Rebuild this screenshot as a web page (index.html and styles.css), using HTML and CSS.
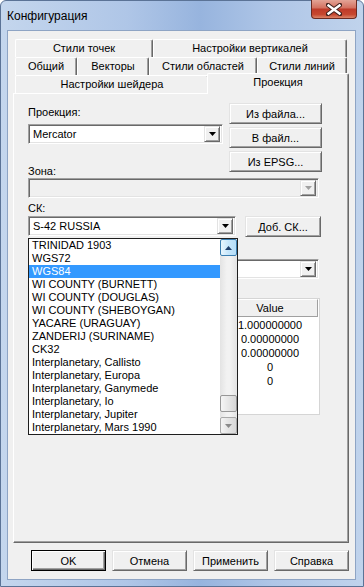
FILE: index.html
```html
<!DOCTYPE html>
<html lang="ru">

<head>
      <meta charset="UTF-8">
      <meta name="viewport" content="width=device-width, initial-scale=1.0">
      <title>Конфигурация</title>
      <link rel="stylesheet" href="styles.css">
</head>

<body>
      <div class="window">
            <div class="titlebar">
                  <span class="title">Конфигурация</span>
                  <div class="close-btn">
                        <svg width="16" height="13" viewBox="0 0 16 13">
                              <path d="M2 2 L14 11 M14 2 L2 11" stroke="#40201c" stroke-width="4.4" stroke-linecap="round" fill="none"/>
                              <path d="M2.5 2.5 L13.5 10.5 M13.5 2.5 L2.5 10.5" stroke="#fff" stroke-width="2.4" stroke-linecap="square" fill="none"/>
                        </svg>
                  </div>
            </div>

            <div class="client">
                  <div class="tabs">
                        <div class="tab-row">
                              <div class="tab" style="width: 138px">Стили точек</div>
                              <div class="tab" style="width: 194px">Настройки вертикалей</div>
                        </div>
                        <div class="tab-row">
                              <div class="tab" style="width: 62px">Общий</div>
                              <div class="tab" style="width: 72px">Векторы</div>
                              <div class="tab" style="width: 108px">Стили областей</div>
                              <div class="tab" style="width: 90px">Стили линий</div>
                        </div>
                        <div class="tab-row">
                              <div class="tab" style="width: 194px">Настройки шейдера</div>
                              <div class="tab tab-active">Проекция</div>
                        </div>
                  </div>

                  <div class="panel">
                        <div class="proj-row">
                              <div class="proj-left">
                                    <div class="label">Проекция:</div>
                                    <div class="combo proj-combo">
                                          <span class="combo-text">Mercator</span>
                                          <span class="drop-btn"><svg width="7" height="4" viewBox="0 0 7 4"><path d="M0 0 H7 L3.5 4 Z" fill="#000"/></svg></span>
                                    </div>
                                    <div class="label zone-label">Зона:</div>
                              </div>
                              <div class="file-buttons">
                                    <button class="btn">Из файла...</button>
                                    <button class="btn">В файл...</button>
                                    <button class="btn">Из EPSG...</button>
                              </div>
                        </div>

                        <div class="combo combo-full combo-disabled">
                              <span class="combo-text"></span>
                              <span class="drop-btn"><svg width="7" height="4" viewBox="0 0 7 4"><path d="M0 0 H7 L3.5 4 Z" fill="#a0a0a0"/></svg></span>
                        </div>

                        <div class="label ck-label">СК:</div>
                        <div class="ck-row">
                              <div class="combo ck-combo">
                                    <span class="combo-text">S-42 RUSSIA</span>
                                    <span class="drop-btn"><svg width="7" height="4" viewBox="0 0 7 4"><path d="M0 0 H7 L3.5 4 Z" fill="#000"/></svg></span>
                              </div>
                              <button class="btn add-btn">Доб. СК...</button>
                        </div>

                        <div class="combo combo-full datum-combo">
                              <span class="combo-text"></span>
                              <span class="drop-btn"><svg width="7" height="4" viewBox="0 0 7 4"><path d="M0 0 H7 L3.5 4 Z" fill="#000"/></svg></span>
                        </div>

                        <div class="listview">
                              <div class="lv-header">
                                    <div class="lv-head lv-name"></div>
                                    <div class="lv-head lv-value">Value</div>
                              </div>
                              <div class="lv-row"><span class="lv-name"></span><span class="lv-value">1.000000000</span></div>
                              <div class="lv-row"><span class="lv-name"></span><span class="lv-value">0.00000000</span></div>
                              <div class="lv-row"><span class="lv-name"></span><span class="lv-value">0.00000000</span></div>
                              <div class="lv-row"><span class="lv-name"></span><span class="lv-value">0</span></div>
                              <div class="lv-row"><span class="lv-name"></span><span class="lv-value">0</span></div>
                        </div>

                        <!-- открытый список СК поверх остальных полей -->
                        <div class="dropdown">
                              <div class="dd-items">
                                    <div class="dd-item">TRINIDAD 1903</div>
                                    <div class="dd-item">WGS72</div>
                                    <div class="dd-item dd-selected">WGS84</div>
                                    <div class="dd-item">WI COUNTY (BURNETT)</div>
                                    <div class="dd-item">WI COUNTY (DOUGLAS)</div>
                                    <div class="dd-item">WI COUNTY (SHEBOYGAN)</div>
                                    <div class="dd-item">YACARE (URAGUAY)</div>
                                    <div class="dd-item">ZANDERIJ (SURINAME)</div>
                                    <div class="dd-item">CK32</div>
                                    <div class="dd-item">Interplanetary, Callisto</div>
                                    <div class="dd-item">Interplanetary, Europa</div>
                                    <div class="dd-item">Interplanetary, Ganymede</div>
                                    <div class="dd-item">Interplanetary, Io</div>
                                    <div class="dd-item">Interplanetary, Jupiter</div>
                                    <div class="dd-item">Interplanetary, Mars 1990</div>
                              </div>
                              <div class="scrollbar">
                                    <div class="sb-btn sb-hover"><svg width="7" height="4" viewBox="0 0 7 4"><path d="M3.5 0 L7 4 H0 Z" fill="#1f3e6a"/></svg></div>
                                    <div class="sb-track"><div class="sb-thumb"></div></div>
                                    <div class="sb-btn"><svg width="7" height="4" viewBox="0 0 7 4"><path d="M0 0 H7 L3.5 4 Z" fill="#8a8a8a"/></svg></div>
                              </div>
                        </div>
                  </div>

                  <div class="footer">
                        <button class="btn btn-default">OK</button>
                        <button class="btn">Отмена</button>
                        <button class="btn">Применить</button>
                        <button class="btn">Справка</button>
                  </div>
            </div>
      </div>
</body>

</html>
```

FILE: styles.css
```css
* {
      box-sizing: border-box;
}

body {
      margin: 0;
      font-family: "Liberation Sans", Arial, sans-serif;
      font-size: 11px;
      color: #000;
      background: #fff;
}

/* рамка окна */
.window {
      position: relative;
      width: 364px;
      height: 587px;
      display: flex;
      flex-direction: column;
      padding: 0 7px 6px 6px;
      border: 1px solid #5b7396;
      border-radius: 6px 6px 0 0;
      background: linear-gradient(to right, #c4d6ed 0%, #afc6e7 35%, #97b4de 55%, #afc6e7 75%, #c0d3ec 100%);
}

.titlebar {
      height: 29px;
      display: flex;
      align-items: center;
}

.title {
      font-size: 12px;
      color: #000;
}

.close-btn {
      position: absolute;
      top: -1px;
      right: 6px;
      width: 46px;
      height: 19px;
      display: flex;
      align-items: center;
      justify-content: center;
      border: 1px solid #6b2b22;
      border-top: none;
      border-radius: 0 0 4px 4px;
      background: linear-gradient(to bottom, #e3a496 0%, #d47362 42%, #bf3b29 52%, #c6472f 80%, #dc8468 100%);
}

.client {
      flex: 1;
      display: flex;
      flex-direction: column;
      background: #f0f0f0;
      border: 1px solid #8ea4c4;
      padding: 8px 6px 8px 5px;
}

/* вкладки */
.tabs {
      display: flex;
      flex-direction: column;
}

.tab-row {
      display: flex;
      height: 18px;
      margin-left: 2px;
}

.tab {
      height: 18px;
      border: 1px solid #fff;
      border-right-color: #696969;
      border-bottom: none;
      border-radius: 2px 2px 0 0;
      box-shadow: inset -1px 0 #a0a0a0;
      background: #f0f0f0;
      text-align: center;
      line-height: 17px;
      white-space: nowrap;
}

.tab-active {
      position: relative;
      z-index: 1;
      width: 142px;
      height: 21px;
      margin-left: -2px;
      margin-top: -2px;
      line-height: 16px;
}

.panel {
      position: relative;
      flex: 1;
      border: 1px solid;
      border-color: #fff #696969 #696969 #fff;
      box-shadow: inset -1px -1px #a0a0a0;
      padding: 9px 0 0 14px;
}

.label {
      line-height: 13px;
      height: 13px;
}

.proj-row {
      display: flex;
      align-items: flex-start;
}

.proj-left {
      width: 195px;
      padding-top: 3px;
}

.proj-combo {
      margin-top: 5px;
}

.zone-label {
      margin-top: 21px;
}

.file-buttons {
      display: flex;
      flex-direction: column;
      gap: 3px;
      width: 93px;
      margin-left: 6px;
}

.ck-label {
      margin-top: 4px;
}

.ck-row {
      display: flex;
      align-items: flex-start;
      gap: 9px;
      margin-top: 1px;
}

.ck-combo {
      width: 208px;
}

.datum-combo {
      margin-top: 22px;
}

/* комбобоксы */
.combo {
      height: 20px;
      display: flex;
      align-items: center;
      padding: 2px;
      background: #fff;
      border: 1px solid;
      border-color: #a0a0a0 #fff #fff #a0a0a0;
      box-shadow: inset 1px 1px #696969, inset -1px -1px #e3e3e3;
}

.combo-full {
      width: 291px;
}

.combo-disabled {
      background: #f0f0f0;
}

.combo-text {
      flex: 1;
      padding-left: 2px;
      white-space: nowrap;
}

.drop-btn {
      width: 16px;
      height: 16px;
      display: flex;
      align-items: center;
      justify-content: center;
      background: #f0f0f0;
      border: 1px solid;
      border-color: #e3e3e3 #696969 #696969 #e3e3e3;
      box-shadow: inset 1px 1px #fff, inset -1px -1px #a0a0a0;
}

/* кнопки */
.btn {
      font: inherit;
      color: #000;
      height: 21px;
      padding: 0;
      background: #f0f0f0;
      border: 1px solid;
      border-color: #e3e3e3 #696969 #696969 #e3e3e3;
      box-shadow: inset 1px 1px #fff, inset -1px -1px #a0a0a0;
      white-space: nowrap;
}

.btn-default {
      border-color: #000;
      box-shadow: inset 1px 1px #fff, inset -1px -1px #696969, inset -2px -2px #a0a0a0;
}

.add-btn {
      width: 76px;
}

.footer {
      display: flex;
      justify-content: flex-end;
      gap: 6px;
      padding-top: 7px;
}

.footer .btn {
      width: 75px;
}

/* таблица параметров */
.listview {
      width: 292px;
      height: 117px;
      margin-top: 19px;
      background: #fff;
      border: 1px solid #d5d5d5;
}

.lv-header {
      display: flex;
      height: 18px;
}

.lv-head {
      height: 18px;
      line-height: 16px;
      text-align: center;
      border: 1px solid;
      border-color: #fff #a0a0a0 #a0a0a0 #fff;
      background: #f0f0f0;
}

.lv-name {
      width: 193px;
}

.lv-value {
      width: 96px;
      text-align: center;
}

.lv-row {
      display: flex;
      height: 14px;
      line-height: 14px;
}

.lv-row:first-of-type {
      margin-top: 0;
}

.lv-header + .lv-row {
      margin-top: 1px;
}

/* выпадающий список */
.dropdown {
      position: absolute;
      left: 14px;
      top: 144px;
      width: 210px;
      height: 197px;
      display: flex;
      background: #fff;
      border: 1px solid #1e1e1e;
      z-index: 2;
}

.dd-items {
      flex: 1;
}

.dd-item {
      height: 13px;
      line-height: 13px;
      padding-left: 3px;
      white-space: nowrap;
}

.dd-selected {
      background: #3399ff;
      color: #fff;
}

.scrollbar {
      width: 17px;
      display: flex;
      flex-direction: column;
      background: #ececec;
}

.sb-btn {
      height: 17px;
      display: flex;
      align-items: center;
      justify-content: center;
      border: 1px solid #a9a9a9;
      border-radius: 2px;
      background: linear-gradient(to right, #f4f4f4, #e4e4e4 50%, #d8d8d8);
}

.sb-hover {
      border-color: #3c7fb1;
      background: linear-gradient(to right, #e9f6fd, #c6e6fb 50%, #b4ddf8);
}

.sb-track {
      flex: 1;
      display: flex;
      flex-direction: column;
      justify-content: flex-end;
      padding-bottom: 5px;
      background: linear-gradient(to right, #e3e3e3, #f2f2f2 40%, #f2f2f2 60%, #e3e3e3);
}

.sb-thumb {
      height: 17px;
      border: 1px solid #979797;
      border-radius: 2px;
      background: linear-gradient(to right, #f5f5f5, #e6e6e6 50%, #d6d6d6);
}
```
